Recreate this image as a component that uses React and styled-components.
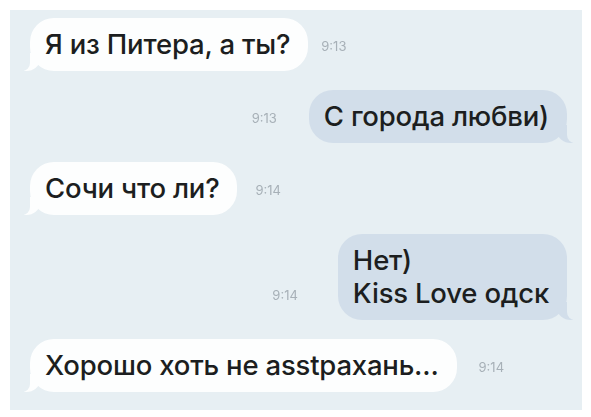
import React from 'react';
import styled, { createGlobalStyle } from 'styled-components';

const PANEL = '#e7eff3';
const IN_BG = '#fdfefe';
const OUT_BG = '#d2deea';

const GlobalStyle = createGlobalStyle`
  html, body {
    margin: 0;
    padding: 0;
    background: #ffffff;
  }
  body {
    font-family: Inter, "Open Sans", "Liberation Sans", Arial, sans-serif;
  }
`;

const Frame = styled.div`
  width: 591px;
  height: 417px;
  padding: 10px 9px 7px 10px;
  box-sizing: border-box;
  background: #ffffff;
`;

const Panel = styled.div`
  height: 100%;
  box-sizing: border-box;
  background: ${PANEL};
  padding: 8px 15px 8px 20px;
  display: flex;
  flex-direction: column;
  gap: 19px;
`;

const Row = styled.div`
  display: flex;
  align-items: flex-end;
  justify-content: ${p => (p.$out ? 'flex-end' : 'flex-start')};
  gap: ${p => p.$gap}px;
`;

const Bubble = styled.div`
  position: relative;
  background: ${p => (p.$out ? OUT_BG : IN_BG)};
  color: #1c1e20;
  font-size: 27.5px;
  font-weight: 500;
  letter-spacing: -0.2px;
  line-height: 33px;
  padding: 10px 18px 10px 15px;
  border-radius: 24px;
  white-space: nowrap;

  &::before {
    content: "";
    position: absolute;
    bottom: 0;
    width: 16px;
    height: 18px;
    background: ${p => (p.$out ? OUT_BG : IN_BG)};
    ${p => (p.$out
      ? 'right: -6px; border-bottom-left-radius: 14px 12px;'
      : 'left: -6px; border-bottom-right-radius: 14px 12px;')}
  }

  &::after {
    content: "";
    position: absolute;
    bottom: 0;
    width: 10px;
    height: 19px;
    background: ${PANEL};
    ${p => (p.$out
      ? 'right: -10px; border-bottom-left-radius: 8px;'
      : 'left: -10px; border-bottom-right-radius: 8px;')}
  }
`;

const Time = styled.span`
  font-size: 13px;
  line-height: 15px;
  color: #a7b0b7;
  margin-bottom: 17px;
  filter: blur(0.4px);
`;

const messages = [
  { out: false, lines: ['Я из Питера, а ты?'], time: '9:13', gap: 13 },
  { out: true, lines: ['С города любви)'], time: '9:13', gap: 32 },
  { out: false, lines: ['Сочи что ли?'], time: '9:14', gap: 18 },
  { out: true, lines: ['Нет)', 'Kiss Love одск'], time: '9:14', gap: 40 },
  { out: false, lines: ['Хорошо хоть не asstрахань...'], time: '9:14', gap: 22 },
];

export default function App() {
  return (
    <>
      <GlobalStyle />
      <Frame>
        <Panel>
          {messages.map((m, i) => (
            <Row key={i} $out={m.out} $gap={m.gap}>
              {m.out && <Time>{m.time}</Time>}
              <Bubble $out={m.out}>
                {m.lines.map((l, j) => <div key={j}>{l}</div>)}
              </Bubble>
              {!m.out && <Time>{m.time}</Time>}
            </Row>
          ))}
        </Panel>
      </Frame>
    </>
  );
}
